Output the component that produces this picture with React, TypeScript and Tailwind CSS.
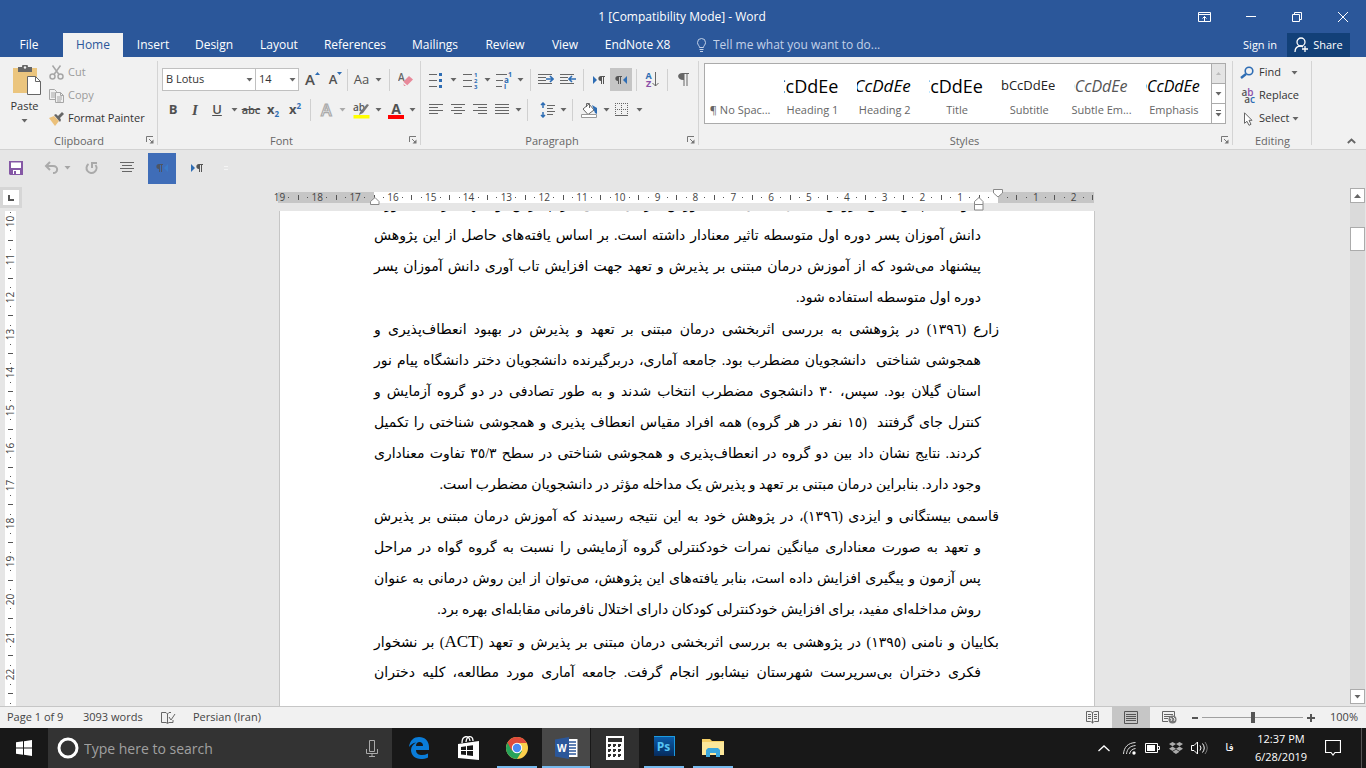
import { ReactNode } from "react";
import clsx from "clsx";

interface LineProps {
  children: ReactNode;
  first?: boolean;
  last?: boolean;
}

const tabs = [
  { name: "Insert", width: "w-[60px]" },
  { name: "Design", width: "w-[62px]" },
  { name: "Layout", width: "w-[68px]" },
  { name: "References", width: "w-[84px]" },
  { name: "Mailings", width: "w-[76px]" },
  { name: "Review", width: "w-[64px]" },
  { name: "View", width: "w-[56px]" },
  { name: "EndNote X8", width: "w-[89px]" },
];

const styles = [
  { name: "¶ No Spac...", sample: "", look: "text-lg" },
  { name: "Heading 1", sample: "AaBbCcDdEe", look: "text-lg text-black font-medium" },
  { name: "Heading 2", sample: "AaBbCcDdEe", look: "text-[17px] text-black font-medium italic" },
  { name: "Title", sample: "AaBbCcDdEe", look: "text-lg text-black font-medium" },
  { name: "Subtitle", sample: "AaBbCcDdEe", look: "text-[13px] text-[#222]" },
  { name: "Subtle Em...", sample: "AaBbCcDdEe", look: "text-[16px] text-[#555] italic" },
  { name: "Emphasis", sample: "AaBbCcDdEe", look: "text-[16px] text-black italic" },
];

const rulerNumbers = [
  "19", "18", "17", "16", "15", "14", "13", "12", "11", "10", "9",
  "8", "7", "6", "5", "4", "3", "2", "1", "", "1", "2",
];

const sideNumbers = ["10", "11", "12", "13", "14", "15", "16", "17", "18", "19", "20", "21", "22", ""];

const Arrow = ({ className = "w-3" }: { className?: string }) => (
  <span className={clsx("flex shrink-0 justify-center", className)}>
    <svg width="7" height="4" viewBox="0 0 7 4">
      <path d="M0.5 0h6L3.5 3.5z" fill="#666" />
    </svg>
  </span>
);

const Sep = ({ className }: { className?: string }) => (
  <span className={clsx("h-[22px] w-px shrink-0 bg-[#d0d0d0]", className)} />
);

const Tool = ({ label, children, className = "w-[22px]" }: { label: string; children: ReactNode; className?: string }) => (
  <button aria-label={label} className={clsx("flex h-[23px] shrink-0 items-center justify-center", className)}>
    {children}
  </button>
);

const Launcher = () => (
  <button aria-label="More options" className="absolute right-1 bottom-[5px]">
    <svg width="8" height="8" viewBox="0 0 8 8" fill="none" stroke="#777">
      <path d="M0.5 6V0.5H7M3 3l3 3" />
      <path d="M7.5 3.5v4h-4z" fill="#777" stroke="none" />
    </svg>
  </button>
);

const Group = ({ title, width, children, launcher = true }: { title: string; width: string; children: ReactNode; launcher?: boolean }) => (
  <section className={clsx("relative flex h-[92px] flex-col", width)}>
    <div className="h-[76px]">{children}</div>
    <div className="text-center text-[11px] leading-4 text-[#666]">{title}</div>
    {launcher && <Launcher />}
    <span className="absolute top-1 right-0 h-[84px] w-px bg-[#d4d4d4]" />
  </section>
);

const Lines = ({ d }: { d: string }) => (
  <svg width="14" height="12" viewBox="0 0 14 12" fill="none" stroke="#666">
    <path d={d} />
  </svg>
);

const Pilcrow = ({ dir, dark = "#555", blue = "#2e6db4" }: { dir: "ltr" | "rtl"; dark?: string; blue?: string }) => (
  <svg width="14" height="10" viewBox="0 0 14 10">
    <path d={dir === "ltr" ? "M1 1v8L5 5z" : "M13 1v8L9 5z"} fill={blue} />
    <path
      d={dir === "ltr" ? "M9 1h4v1h-1v7h-1V2h-1v7H9V6C5.500 6 5.500 1 9 1z" : "M4 1h4v1H7v7H6V2H5v7H4V6C.5 6 .5 1 4 1z"}
      fill={dark}
    />
  </svg>
);

const ClipboardGroup = () => (
  <Group title="Clipboard" width="w-[158px]">
    <div className="flex">
      <button className="flex w-[49px] shrink-0 flex-col items-center pt-2 text-[11px] leading-4">
        <svg width="29" height="31" viewBox="0 0 29 31" className="ml-1">
          <path d="M1 3h24v25H1z" fill="#ebc57e" />
          <path d="M6 2h4a3 3 0 0 1 6 0h4v5H6z" fill="#666" />
          <circle cx="13" cy="2.500" r="1.200" fill="#f1f1f1" />
          <path d="M15.500 11.500h8l5 5v13h-13z" fill="#fff" stroke="#666" />
          <path d="M23.500 11.500v5h5" fill="none" stroke="#666" />
        </svg>
        <span className="mt-[2px]">Paste</span>
        <Arrow className="mt-[5px] w-3" />
      </button>
      <div className="flex flex-col pt-1 text-[11px] whitespace-nowrap">
        <button className="flex h-[23px] items-center gap-1 text-[#9b9b9b]">
          <svg width="15" height="15" viewBox="0 0 15 15" fill="none" stroke="#a6a6a6" strokeWidth="1.500">
            <path d="M3.500 0.500l6.500 9M11.500 0.500L5 9.500" />
            <circle cx="3.500" cy="11.500" r="2.500" />
            <circle cx="11.500" cy="11.500" r="2.500" />
          </svg>
          Cut
        </button>
        <button className="flex h-[23px] items-center gap-1 text-[#9b9b9b]">
          <svg width="15" height="14" viewBox="0 0 15 14" fill="#f1f1f1" stroke="#a6a6a6">
            <path d="M0.500 0.500h5l2 2v8h-7zM2 4h4M2 6h4M2 8h4" />
            <path d="M6.500 3.500h5l3 3v7h-8zM11.500 3.500v3h3M8 8h5M8 10h5M8 12h4" />
          </svg>
          Copy
        </button>
        <button className="flex h-[23px] items-center gap-1">
          <svg width="15" height="14" viewBox="0 0 15 14">
            <path d="M0 6l5-2 5 5-4 5z" fill="#ebc07a" />
            <path d="M5 3l2-1 2 2 4-4 2 2-4 4 1 2-1 2z" fill="#666" />
          </svg>
          Format Painter
        </button>
      </div>
    </div>
  </Group>
);

const FontGroup = () => (
  <Group title="Font" width="w-[263px] pr-4">
    <div className="flex flex-col gap-[7px] pt-[11px] pl-1 text-[#505050]">
      <div className="flex h-[23px] items-center">
        <label className="flex h-[23px] w-[94px] shrink-0 items-center border border-[#c0c0c0] bg-white">
          <select aria-label="Font" className="h-full w-20 appearance-none pl-[3px] text-[11px] text-[#333]">
            <option>B Lotus</option>
          </select>
          <Arrow />
        </label>
        <label className="-ml-px flex h-[23px] w-[44px] shrink-0 items-center border border-[#c0c0c0] bg-white">
          <select aria-label="Font size" className="h-full w-[30px] appearance-none pl-[3px] text-[11px] text-[#333]">
            <option>14</option>
          </select>
          <Arrow />
        </label>
        <Tool label="Increase font size" className="ml-[2px] w-[23px]">
          <span className="text-[15px] font-semibold">A</span>
          <svg width="5" height="3" className="mb-3"><path d="M0 3L2.500 0L5 3z" fill="#2e6db4" /></svg>
        </Tool>
        <Tool label="Decrease font size" className="w-[23px]">
          <span className="text-[13px] font-semibold">A</span>
          <svg width="5" height="3" className="mb-3"><path d="M0 0h5L2.500 3z" fill="#2e6db4" /></svg>
        </Tool>
        <Sep />
        <Tool label="Change case" className="w-[41px] gap-1">
          <span className="text-[13px]">Aa</span>
          <Arrow className="w-[10px]" />
        </Tool>
        <Sep />
        <Tool label="Clear formatting" className="ml-1 w-[22px]">
          <svg width="15" height="15" viewBox="0 0 15 15">
            <text x="0" y="9" fontSize="10" fontWeight="600" fill="#666">A</text>
            <path d="M5 10l6-6 4 3.500-6.500 6.500H6z" fill="#e8899a" />
            <path d="M4 9.500L9 14" stroke="#f1f1f1" strokeWidth="1.500" />
          </svg>
        </Tool>
      </div>
      <div className="flex h-6 items-center text-[13px]">
        <Tool label="Bold"><b>B</b></Tool>
        <Tool label="Italic"><i className="font-['Liberation_Serif',serif] text-[15px] font-bold">I</i></Tool>
        <Tool label="Underline"><u className="font-semibold">U</u></Tool>
        <Arrow />
        <Tool label="Strikethrough"><s className="text-[11px] font-semibold">abc</s></Tool>
        <Tool label="Subscript"><b>x</b><b className="mt-2 text-[8px] text-[#2e6db4]">2</b></Tool>
        <Tool label="Superscript"><b>x</b><b className="mb-2 text-[8px] text-[#2e6db4]">2</b></Tool>
        <Sep className="mx-1" />
        <Tool label="Text effects">
          <svg width="14" height="16" viewBox="0 0 14 16" className="overflow-visible">
            <text x="2" y="14" fontSize="16" fontWeight="600" fill="#fff" stroke="#aaa" strokeWidth="1.200">A</text>
          </svg>
        </Tool>
        <Arrow className="w-[10px] opacity-50" />
        <Tool label="Highlight" className="ml-[2px] w-6 flex-col">
          <svg width="17" height="17" viewBox="0 0 17 17" className="overflow-visible">
            <text x="0" y="9" fontSize="10" fontWeight="600" fill="#555">ab</text>
            <path d="M14 2l2 1-6 8-4 2 1-3z" fill="#777" />
            <path d="M0.500 13h16v3.500h-16z" fill="#ff0" />
          </svg>
        </Tool>
        <Arrow className="w-[10px]" />
        <Tool label="Font color" className="ml-[2px] w-[22px] flex-col">
          <b className="h-[13px] text-[14px] leading-[13px]">A</b>
          <span className="h-1 w-4 bg-[#f00]" />
        </Tool>
        <Arrow className="w-[10px]" />
      </div>
    </div>
  </Group>
);

const ParagraphGroup = () => (
  <Group title="Paragraph" width="w-[278px] pr-4">
    <div className="flex flex-col gap-[7px] pt-[11px] pl-1">
      <div className="flex h-[23px] items-center">
        <Tool label="Bullets">
          <svg width="14" height="16" viewBox="0 0 14 16">
            <path d="M0 2.500h8M0 8.500h8M0 14.500h8" stroke="#666" />
            <path d="M10 1h3v3h-3zM10 7h3v3h-3zM10 13h3v3h-3z" fill="#2e6db4" />
          </svg>
        </Tool>
        <Arrow />
        <Tool label="Numbering">
          <svg width="15" height="16" viewBox="0 0 15 16" className="overflow-visible">
            <path d="M0 2.500h9M0 8.500h9M0 14.500h9" stroke="#666" />
            <g fontSize="6" fontWeight="700" fill="#2e6db4">
              <text x="11" y="5">1</text>
              <text x="11" y="11">2</text>
              <text x="11" y="17">3</text>
            </g>
          </svg>
        </Tool>
        <Arrow />
        <Tool label="Multilevel list">
          <svg width="16" height="16" viewBox="0 0 16 16" className="overflow-visible">
            <path d="M0 2.500h11M0 8.500h7M0 14.500h6" stroke="#666" />
            <g fontSize="7" fontWeight="700" fill="#2e6db4">
              <text x="12" y="5">1</text>
              <text x="8" y="11" fontSize="8">a</text>
              <text x="8" y="17">i</text>
            </g>
          </svg>
        </Tool>
        <Arrow className="w-[10px]" />
        <Sep className="ml-[5px]" />
        <Tool label="Decrease indent" className="ml-1 w-[22px]">
          <svg width="16" height="11" viewBox="0 0 16 11">
            <path d="M0 .5h14M0 3.500h8M0 6.500h8M0 9.500h14" stroke="#666" />
            <path d="M8 5h7M12 2l3 3-3 3" fill="none" stroke="#2e6db4" strokeWidth="1.600" />
          </svg>
        </Tool>
        <Tool label="Increase indent">
          <svg width="16" height="11" viewBox="0 0 16 11">
            <path d="M0 .5h14M0 3.500h8M0 6.500h8M0 9.500h14" stroke="#666" />
            <path d="M16 5H9M12 2L9 5l3 3" fill="none" stroke="#2e6db4" strokeWidth="1.600" />
          </svg>
        </Tool>
        <Sep className="ml-1" />
        <Tool label="Left to right" className="ml-1 w-[22px]"><Pilcrow dir="ltr" /></Tool>
        <Tool label="Right to left" className="w-[22px] bg-[#c5c5c5]"><Pilcrow dir="rtl" /></Tool>
        <Sep className="ml-1" />
        <Tool label="Sort" className="ml-1 w-[22px]">
          <span className="flex flex-col text-[9px] leading-2 font-bold">
            <span className="text-[#2e6db4]">A</span>
            <span className="text-[#8a4fa8]">Z</span>
          </span>
          <svg width="7" height="15" viewBox="0 0 7 15" fill="none" stroke="#666"><path d="M3.500 0v14M0.500 11l3 3 3-3" /></svg>
        </Tool>
        <Sep className="ml-1" />
        <Tool label="Show marks" className="ml-1 w-[22px]">
          <svg width="11" height="13" viewBox="0 0 11 13"><path d="M4.500 0H11v1H9.500v12h-1V1h-2v12h-1V7C-1.500 7-1.500 0 4.500 0z" fill="#666" /></svg>
        </Tool>
      </div>
      <div className="flex h-6 items-center">
        <Tool label="Align left"><Lines d="M0 .5h14M0 3.500h9M0 6.500h14M0 9.500h9" /></Tool>
        <Tool label="Center"><Lines d="M0 .5h14M3 3.500h8M0 6.500h14M3 9.500h8" /></Tool>
        <Tool label="Align right"><Lines d="M0 .5h14M5 3.500h9M0 6.500h14M5 9.500h9" /></Tool>
        <Tool label="Justify"><Lines d="M0 .5h14M0 3.500h14M0 6.500h14M0 9.500h14" /></Tool>
        <Arrow className="w-[10px]" />
        <Sep className="mx-1" />
        <Tool label="Line spacing" className="ml-1 w-[22px]">
          <svg width="15" height="16" viewBox="0 0 15 16" fill="none">
            <path d="M3 1v5M1 3l2-2 2 2M3 15v-5M1 13l2 2 2-2" stroke="#2e6db4" strokeWidth="1.500" />
            <path d="M7 3.500h8M7 6.500h6M7 9.500h8M7 12.500h6" stroke="#666" />
          </svg>
        </Tool>
        <Arrow className="w-[10px]" />
        <Sep className="mx-1" />
        <Tool label="Shading" className="w-6">
          <svg width="17" height="16" viewBox="0 0 17 16">
            <path d="M2 7l6-5 5 6-6 4.500z" fill="#fff" stroke="#666" />
            <path d="M5.500 5V1.500h3V6" fill="none" stroke="#666" />
            <path d="M11 3l5 3v6l-2-1z" fill="#2e6db4" />
            <path d="M0.500 12.500h15v3h-15z" fill="#fff" stroke="#999" />
          </svg>
        </Tool>
        <Arrow className="w-[10px]" />
        <Tool label="Borders">
          <svg width="14" height="14" viewBox="0 0 14 14" fill="none" stroke="#666">
            <path d="M.5 0v13M6.500 0v13M12.500 0v13M0 .5h13M0 6.500h13" strokeDasharray="1 1" />
            <path d="M0 12.500h13" />
          </svg>
        </Tool>
        <Arrow />
      </div>
    </div>
  </Group>
);

const StylesGroup = () => (
  <Group title="Styles" width="min-w-0 flex-1 pl-[5px] pr-2">
    <div className="-mr-px pt-[6px]">
      <div className="flex h-[61px] border border-[#ababab] bg-white">
        <div className="flex flex-1 overflow-hidden">
          {styles.map((s) => (
            <button key={s.name} className="flex min-w-0 flex-1 flex-col items-center pr-[2px]">
              <span className={clsx("mr-[2px] flex h-[38px] w-[54px] items-center justify-end overflow-hidden pt-[5px]", s.look)}>
                {s.sample}
              </span>
              <span className="text-[11px] leading-4 whitespace-nowrap text-[#666]">{s.name}</span>
            </button>
          ))}
        </div>
        <div className="flex w-[14px] flex-col divide-y divide-[#ababab] border-l border-[#ababab]">
          <button aria-label="Scroll up" className="flex flex-1 items-center justify-center bg-[#e4e4e4]">
            <svg width="5" height="3"><path d="M0 3L2.500 0L5 3z" fill="#bbb" /></svg>
          </button>
          <button aria-label="Scroll down" className="flex flex-1 items-center justify-center"><Arrow /></button>
          <button aria-label="More styles" className="flex flex-1 flex-col items-center justify-center gap-[2px]">
            <span className="h-px w-[5px] bg-[#666]" />
            <Arrow />
          </button>
        </div>
      </div>
    </div>
  </Group>
);

const EditingGroup = () => (
  <Group title="Editing" width="w-[79px]" launcher={false}>
    <div className="flex flex-col pt-1 pl-[7px] text-[11px]">
      <button className="flex h-[23px] items-center gap-1">
        <svg width="15" height="13" viewBox="0 0 15 13" fill="none" stroke="#2e6db4">
          <circle cx="9" cy="5" r="3.800" strokeWidth="1.600" />
          <path d="M6 8l-5 4" strokeWidth="2.500" />
        </svg>
        Find
        <Arrow className="ml-1 w-3" />
      </button>
      <button className="flex h-[23px] items-center gap-1">
        <span className="flex w-[15px] flex-col text-[10px] leading-[7px] font-semibold text-[#555]">
          <span>a<span className="text-[#8a4fa8]">b</span></span>
          <span className="self-end">a<span className="text-[#2e6db4]">c</span></span>
        </span>
        Replace
      </button>
      <button className="flex h-[23px] items-center gap-1">
        <svg width="15" height="14" viewBox="0 0 15 14">
          <path d="M4.500 .8v10.500l2.500-2 2 4 2-1-2-4h3z" fill="#fff" stroke="#666" />
        </svg>
        Select
        <Arrow className="-ml-1 w-3" />
      </button>
    </div>
  </Group>
);

const QuickAccess = () => (
  <div className="flex h-[37px] items-center border-t border-[#d2d2d2]">
    <Tool label="Save" className="w-8">
      <svg width="14" height="14" viewBox="0 0 14 14">
        <path d="M0 0h14v14H1l-1-1z" fill="#8558a5" />
        <path d="M2 1.500h10V7H2zM4 9h7v4H4z" fill="#fff" />
        <path d="M5 10h2v3H5z" fill="#8558a5" />
      </svg>
    </Tool>
    <Tool label="Undo" className="ml-2 w-[22px]">
      <svg width="15" height="14" viewBox="0 0 15 14" fill="none" stroke="#aaa" strokeWidth="2">
        <path d="M6 1L2 5l4 4M2 5h7c6 0 5 7 0 7" />
      </svg>
    </Tool>
    <Arrow className="w-[10px] opacity-50" />
    <Tool label="Redo" className="ml-2 w-[22px]">
      <svg width="15" height="14" viewBox="0 0 15 14" fill="none" stroke="#aaa" strokeWidth="2">
        <path d="M8 7V2h5M4.500 3a5 5 0 1 0 7 1" />
      </svg>
    </Tool>
    <Tool label="Center text" className="ml-[14px] w-[22px]"><Lines d="M0 .5h14M2 3.500h10M0 6.500h14M2 9.500h10" /></Tool>
    <button aria-label="Right to left" className="ml-[10px] flex h-[31px] w-7 items-center justify-center bg-[#3f6db8]">
      <Pilcrow dir="rtl" dark="#4d5563" blue="#3a7ac8" />
    </button>
    <Tool label="Left to right text" className="ml-[10px] w-[22px]"><Pilcrow dir="ltr" /></Tool>
    <span className="ml-4 flex w-1 flex-col gap-[2px]">
      <span className="h-px bg-[#f4f4f4]" />
      <span className="h-px bg-[#f4f4f4]" />
    </span>
  </div>
);

const Ruler = () => (
  <div className="relative mt-[5px] h-[11px] w-[814px]">
    <div className="-ml-[27px] flex h-full w-[847px] bg-[linear-gradient(to_right,transparent_25px,#c6c6c6_25px,#c6c6c6_121px,#fff_121px,#fff_745px,#c6c6c6_745px,#c6c6c6_841px,transparent_841px)] text-[10px] leading-[11px] text-[#444]">
      <div className="grid flex-1 grid-cols-[repeat(22,minmax(0,1fr))]">
        {rulerNumbers.map((n, i) => (
          <div key={i} className="grid grid-cols-[4fr_1fr_4fr_1fr] items-center justify-items-center">
            <span className={clsx("h-[5px] w-px", i > 0 && "bg-[#555]")} />
            <span className={clsx("size-px", i > 0 && "bg-[#555]")} />
            <span>{n}</span>
            <span className="size-px bg-[#555]" />
          </div>
        ))}
      </div>
      <span className="flex w-[15px] items-center justify-center"><span className="h-[5px] w-px bg-[#555]" /></span>
    </div>
    <svg width="10" height="8" viewBox="0 0 10 8" className="absolute top-[5px] left-[90px]">
      <path d="M.5 7.500V4.500L5 .5l4 4v3z" fill="#fff" stroke="#888" />
    </svg>
    <svg width="10" height="14" viewBox="0 0 10 14" className="absolute top-[5px] left-[694px]">
      <path d="M.5 7.500V4.500L5 .5l4 4v3zM.5 7.500h8.500v5.500H.5z" fill="#fff" stroke="#888" />
    </svg>
    <svg width="10" height="9" viewBox="0 0 10 9" className="absolute -top-[3px] left-[713px]">
      <path d="M.5.5h9v3.500L5 8 .5 4z" fill="#fff" stroke="#888" />
    </svg>
  </div>
);

const SideRuler = () => (
  <div className="ml-[5px] w-[11px] overflow-hidden bg-white">
    <div className="-mt-[16px] grid h-[529px] grid-rows-[repeat(14,minmax(0,1fr))] text-[10px] leading-[11px] text-[#444]">
      {sideNumbers.map((n, i) => (
        <div key={i} className="grid grid-rows-[4fr_1fr_4fr_1fr] items-center justify-items-center">
          <span className="h-px w-[5px] bg-[#555]" />
          <span className="size-px bg-[#555]" />
          <span className="-rotate-90">{n}</span>
          <span className="size-px bg-[#555]" />
        </div>
      ))}
    </div>
  </div>
);

const Line = ({ children, first, last }: LineProps) => (
  <span
    className={clsx(
      "block h-[31px] whitespace-nowrap",
      !first && "pr-[18px]",
      last ? "text-right" : "[text-align-last:justify]"
    )}
  >
    {children}
  </span>
);

const Page = () => (
  <article
    dir="rtl"
    lang="fa"
    className="h-full w-[816px] overflow-hidden border-x border-[#c6c6c6] bg-white pr-[95px] pl-[94px] font-['Liberation_Serif','DejaVu_Sans',serif] text-[14px] leading-[31px] text-black"
  >
    <div className="-mt-[22px] flex flex-col gap-px">
      <p>
        <Line>نمود. همچنین نتایج روش تحلیل نشان داد آموزش درمان مبتنی بر پذیرش و تعهد بر تاب آوری</Line>
        <Line>دانش آموزان پسر دوره اول متوسطه تاثیر معنادار داشته است. بر اساس یافته‌های حاصل از این پژوهش</Line>
        <Line>پیشنهاد می‌شود که از آموزش درمان مبتنی بر پذیرش و تعهد جهت افزایش تاب آوری دانش آموزان پسر</Line>
        <Line last>دوره اول متوسطه استفاده شود.</Line>
      </p>
      <p>
        <Line first>زارع (١٣٩٦) در پژوهشی به بررسی اثربخشی درمان مبتنی بر تعهد و پذیرش در بهبود انعطاف‌پذیری و</Line>
        <Line>همجوشی شناختی&nbsp; دانشجویان مضطرب بود. جامعه آماری، دربرگیرنده دانشجویان دختر دانشگاه پیام نور</Line>
        <Line>استان گیلان بود. سپس، ٣٠ دانشجوی مضطرب انتخاب شدند و به طور تصادفی در دو گروه آزمایش و</Line>
        <Line>کنترل جای گرفتند&nbsp; (١٥ نفر در هر گروه) همه افراد مقیاس انعطاف پذیری و همجوشی شناختی را تکمیل</Line>
        <Line>کردند. نتایج نشان داد بین دو گروه در انعطاف‌پذیری و همجوشی شناختی در سطح ٣٥/٣ تفاوت معناداری</Line>
        <Line last>وجود دارد. بنابراین درمان مبتنی بر تعهد و پذیرش یک مداخله مؤثر در دانشجویان مضطرب است.</Line>
      </p>
      <p>
        <Line first>قاسمی بیستگانی و ایزدی (١٣٩٦)، در پژوهش خود به این نتیجه رسیدند که آموزش درمان مبتنی بر پذیرش</Line>
        <Line>و تعهد به صورت معناداری میانگین نمرات خودکنترلی گروه آزمایشی را نسبت به گروه گواه در مراحل</Line>
        <Line>پس آزمون و پیگیری افزایش داده است، بنابر یافته‌های این پژوهش، می‌توان از این روش درمانی به عنوان</Line>
        <Line last>روش مداخله‌ای مفید، برای افزایش خودکنترلی کودکان دارای اختلال نافرمانی مقابله‌ای بهره برد.</Line>
      </p>
      <p>
        <Line first>
          بکاییان و نامنی (١٣٩٥) در پژوهشی به بررسی اثربخشی درمان مبتنی بر پذیرش و تعهد (
          <span className="text-[17px]">ACT</span>) بر نشخوار
        </Line>
        <Line>فکری دختران بی‌سرپرست شهرستان نیشابور انجام گرفت. جامعه آماری مورد مطالعه، کلیه دختران</Line>
      </p>
    </div>
  </article>
);

const StatusBar = () => (
  <footer className="flex h-[22px] items-center border-t border-[#c6c6c6] bg-[#f1f1f1] pl-[7px] text-[11px] text-[#444]">
    <span className="w-[76px]">Page 1 of 9</span>
    <span className="w-[78px]">3093 words</span>
    <button aria-label="Proofing" className="w-8">
      <svg width="15" height="12" viewBox="0 0 15 12" fill="none" stroke="#666">
        <path d="M6.500 2L5 .5H.5v10H5l1.500 1L8 10.500h4V8M6.500 2v9M6.500 2L8 .5h2M8 5l2 3 4-6" />
      </svg>
    </button>
    <span>Persian (Iran)</span>
    <div className="ml-auto flex h-full items-center">
      <button aria-label="Read mode" className="flex w-10 justify-center">
        <svg width="13" height="13" viewBox="0 0 13 13" fill="none" stroke="#666">
          <path d="M6.500 1.500v11M.5.5h4l2 1 2-1h4v10h-4l-2 1-2-1h-4zM2 3.500h3M2 5.500h3M2 7.500h3M8 3.500h3M8 5.500h3M8 7.500h3" />
        </svg>
      </button>
      <button aria-label="Print layout" className="flex h-full w-[38px] items-center justify-center bg-[#c6c6c6]">
        <svg width="14" height="13" viewBox="0 0 14 13" fill="none" stroke="#555">
          <path d="M.5.5h13v12H.5zM2 3.500h10M2 5.500h10M2 7.500h10M2 9.500h10" />
        </svg>
      </button>
      <button aria-label="Web layout" className="flex w-[38px] justify-center">
        <svg width="15" height="13" viewBox="0 0 15 13" fill="none" stroke="#666">
          <path d="M12.500 5V.5H.5v10H6M2 3.500h9M2 5.500h6M2 7.500h4" />
          <circle cx="10.500" cy="8.500" r="4" fill="#777" stroke="none" />
          <path d="M8 7l2 1-1 2M11 6l2 2-1 2" stroke="#eee" />
        </svg>
      </button>
      <button aria-label="Zoom out" className="ml-1 h-[2px] w-[6px] bg-[#555]" />
      <input
        type="range"
        aria-label="Zoom"
        defaultValue={50}
        className="mx-1 h-3 w-[101px] appearance-none bg-[linear-gradient(#a0a0a0,#a0a0a0)] bg-[length:100%_1px] bg-center bg-no-repeat [&::-webkit-slider-thumb]:h-[11px] [&::-webkit-slider-thumb]:w-1 [&::-webkit-slider-thumb]:appearance-none [&::-webkit-slider-thumb]:bg-[#555]"
      />
      <button aria-label="Zoom in">
        <svg width="8" height="8" viewBox="0 0 8 8" stroke="#555" strokeWidth="2"><path d="M0 4h8M4 0v8" /></svg>
      </button>
      <span className="w-[51px] pr-2 text-right">100%</span>
    </div>
  </footer>
);

const TaskItem = ({ label, children, className, bar }: { label: string; children: ReactNode; className?: string; bar?: string }) => (
  <button aria-label={label} className={clsx("relative flex h-10 w-12 items-center justify-center", className)}>
    {children}
    {bar && <span className={clsx("absolute bottom-0 h-[2px] bg-[#76b9ed]", bar)} />}
  </button>
);

const Taskbar = () => (
  <nav className="flex h-10 items-center bg-[#181818] text-white">
    <button aria-label="Start" className="flex w-12 justify-center">
      <svg width="16" height="16" viewBox="0 0 16 16" fill="#fff">
        <path d="M0 2.300L7 1.300V7.500H0zM8 1.200L16 0v7.500H8zM0 8.500h7v6.200L0 13.700zM8 8.500h8V16l-8-1.200z" />
      </svg>
    </button>
    <label className="flex h-full w-[344px] items-center bg-[#333] pl-[9px]">
      <svg width="22" height="22" viewBox="0 0 22 22" fill="none" stroke="#fff" strokeWidth="3"><circle cx="11" cy="11" r="9" /></svg>
      <input
        placeholder="Type here to search"
        aria-label="Search"
        className="ml-[5px] min-w-0 flex-1 text-[14px] outline-none placeholder:text-[#a0a0a0]"
      />
      <svg width="12" height="17" viewBox="0 0 12 17" fill="none" stroke="#aaa" className="mr-[14px]">
        <path d="M3.500.5h5v11h-5zM.5 9v4.500h11V9M6 13.500v3M3 16.500h6" />
      </svg>
    </label>
    <div className="ml-[3px] flex gap-px">
      <TaskItem label="Edge">
        <svg width="20" height="22" viewBox="0 0 20 22">
          <path d="M0 10C1 3 5 0 10 0c6 0 10 4 10 10v3H7c0 4 3 5 6 5 2 0 4-.5 6-1.500v4C17 21.500 14 22 12 22 6 22 2 18 2 13c0-3 2-6 5-7.500C4 6 2 7.500 0 10zm7-1h7c0-3-1.500-4-3.500-4S7 6.500 7 9z" fill="#0a7cd8" fillRule="evenodd" />
        </svg>
      </TaskItem>
      <TaskItem label="Store">
        <svg width="21" height="24" viewBox="0 0 21 24">
          <path d="M0 8l21-3v19L0 22z" fill="#fff" />
          <path d="M4 7C4-1 11-1 12 5M8 6C9-2 15 0 15 5" fill="none" stroke="#fff" strokeWidth="1.300" />
          <path d="M3 11l5-.7V14H3zM9 10l6-.8V14H9zM3 15h5v4l-5-.6zM9 15h6v5l-6-.8z" fill="#181818" />
        </svg>
      </TaskItem>
      <TaskItem label="Chrome" bar="w-10">
        <svg width="22" height="22" viewBox="0 0 22 22">
          <circle cx="11" cy="11" r="11" fill="#fbcf4b" />
          <path d="M11 11L1.500 5.500A11 11 0 0 0 11 22l5-8z" fill="#27a35a" />
          <path d="M1.500 5.500A11 11 0 0 1 20.800 6H11l-5 8z" fill="#df4b3c" />
          <circle cx="11" cy="11" r="5.200" fill="#fff" />
          <circle cx="11" cy="11" r="4.200" fill="#4a8af4" />
        </svg>
      </TaskItem>
      <TaskItem label="Word" className="bg-[#484848]" bar="w-12">
        <svg width="23" height="22" viewBox="0 0 23 22">
          <path d="M12 2h10.500v18H12z" fill="#fff" />
          <path d="M14 5h7M14 8h7M14 11h7M14 14h7M14 17h7" stroke="#2b579a" strokeWidth="1.500" />
          <path d="M0 2.500L14 0v22L0 19.500z" fill="#2b579a" />
          <text x="2" y="15" fontSize="10" fontWeight="700" fill="#fff">W</text>
        </svg>
      </TaskItem>
      <TaskItem label="Calculator" className="bg-[#303030]">
        <svg width="18" height="24" viewBox="0 0 18 24">
          <path d="M0 0h18v24H0z" fill="#fff" />
          <path d="M2 2h14v4H2z" fill="#303030" />
          <path d="M2 8h3v2H4v1H2zM7 8h3v2H9v1H7zM12 8h3v2h-1v1h-2zM2 13h3v2H4v1H2zM7 13h3v2H9v1H7zM12 13h3v2h-1v1h-2zM2 18h3v2H4v1H2zM7 18h3v2H9v1H7zM12 18h3v2h-1v1h-2z" fill="#303030" />
        </svg>
      </TaskItem>
      <TaskItem label="Photoshop" bar="w-10">
        <span className="-mt-1 flex h-5 w-[21px] items-center justify-center border-t border-r border-[#1c9be0] bg-linear-to-b from-[#0a5ba8] to-[#062c5e] text-[12px] font-bold text-[#55c4f5]">Ps</span>
      </TaskItem>
      <TaskItem label="Explorer" bar="w-10">
        <svg width="22" height="20" viewBox="0 0 22 20">
          <path d="M0 1h8l2 2h12v14H0z" fill="#f5cf66" />
          <path d="M0 4h22v13H0z" fill="#fce79a" />
          <path d="M4 19v-7l2-2h10l2 2v7h-4v-4H8v4z" fill="#3ba7dd" />
        </svg>
      </TaskItem>
    </div>
    <div className="ml-auto flex h-full items-center">
      <svg width="12" height="7" viewBox="0 0 12 7" fill="none" stroke="#fff" strokeWidth="1.300"><path d="M.5 6L6 1l5.500 5" /></svg>
      <svg width="13" height="13" viewBox="0 0 13 13" fill="none" stroke="#ddd" className="ml-[13px]">
        <path d="M.5 12C1 5 5 1 12.500.5M3.500 12C4 7 7 4 12.500 3.500M6.500 12C7 9 9 7 12.500 6.500" />
        <circle cx="11" cy="11" r="1.700" fill="#fff" stroke="none" />
      </svg>
      <svg width="15" height="10" viewBox="0 0 15 10" fill="none" stroke="#fff" className="ml-[9px]">
        <path d="M.5.5h12v9H.5zM13 3.500h1.500v3H13" />
        <path d="M2 2h8v6H2z" fill="#fff" stroke="none" />
      </svg>
      <svg width="14" height="12" viewBox="0 0 14 12" fill="#aaa" className="ml-[9px]">
        <path d="M3.500 0L7 2 3.500 4.300 0 2zM10.500 0L14 2l-3.500 2.300L7 2zM3.500 4.500L7 6.800 3.500 9 0 6.800zM10.500 4.500L14 6.800 10.500 9 7 6.800zM7 7.500l3.500 2.200L7 12 3.500 9.700z" />
      </svg>
      <svg width="17" height="14" viewBox="0 0 17 14" fill="none" stroke="#fff" className="ml-2">
        <path d="M.5 4.500h2.500L6.500 1v12L3 9.500H.5zM9 4.500q2 2.500 0 5M11.500 2.500q3.500 4.500 0 9" />
        <path d="M14 1q4.500 6 0 12" stroke="#777" />
      </svg>
      <span className="w-[43px] text-center font-['DejaVu_Sans',sans-serif] text-[11px]">فا</span>
      <time className="w-[60px] text-center text-[11px] leading-[18px]">
        12:37 PM
        <br />
        6/28/2019
      </time>
      <button aria-label="Notifications" className="ml-[14px]">
        <svg width="16" height="16" viewBox="0 0 16 16" fill="none" stroke="#fff" strokeWidth="1.200"><path d="M.5.5h15v12H10L8 15l-2-2.500H.5z" /></svg>
      </button>
      <span className="ml-5 h-full w-[5px] border-l border-[#555]" />
    </div>
  </nav>
);

const App = () => {
  return (
    <div className="flex h-screen flex-col overflow-hidden bg-[#e6e6e6] font-['Open_Sans','Noto_Sans',sans-serif] text-[#333]">
      <header className="bg-[#2b579a] text-white">
        <div className="flex h-[33px] items-center text-[12px]">
          <span className="ml-[184px] flex-1 text-center">1 [Compatibility Mode] - Word</span>
          <div className="flex">
            <button aria-label="Ribbon display options" className="flex w-12 items-center justify-center">
              <svg width="13" height="10" viewBox="0 0 13 10" fill="none" stroke="#fff"><path d="M.5.5h12v9H.5zM.5 2.500h12M6.500 9V4.500M4.500 6.500l2-2 2 2" /></svg>
            </button>
            <button aria-label="Minimize" className="flex w-[46px] items-center justify-center"><span className="h-px w-[10px] bg-white" /></button>
            <button aria-label="Restore" className="flex w-[46px] items-center justify-center">
              <svg width="10" height="10" viewBox="0 0 10 10" fill="none" stroke="#fff"><path d="M.5 2.500h7v7h-7zM2.500 2.500v-2h7v7h-2" /></svg>
            </button>
            <button aria-label="Close" className="flex w-[46px] items-center justify-center">
              <svg width="10" height="10" viewBox="0 0 10 10" fill="none" stroke="#fff"><path d="M0 0l10 10M10 0L0 10" /></svg>
            </button>
          </div>
        </div>
        <div className="flex h-6 items-center text-[12px]">
          <button className="w-[58px]">File</button>
          <button className="ml-[5px] h-6 w-[60px] bg-[#f1f1f1] text-[#2b579a]">Home</button>
          {tabs.map((t) => (
            <button key={t.name} className={clsx("whitespace-nowrap", t.width)}>{t.name}</button>
          ))}
          <label className="ml-[15px] flex items-center gap-[7px] text-[#c3d1e8]">
            <svg width="9" height="14" viewBox="0 0 9 14" fill="none" stroke="#c3d1e8">
              <path d="M2.500 9.500C2.500 7.500.5 7 .5 4.500a4 4 0 0 1 8 0c0 2.500-2 3-2 5zM2.500 11.500h4M3 13.500h3" />
            </svg>
            <input placeholder="Tell me what you want to do..." className="w-[190px] outline-none placeholder:text-[#c3d1e8]" />
          </label>
          <button className="ml-auto text-[11px]">Sign in</button>
          <button className="mr-4 ml-[10px] flex h-6 w-[63px] items-center justify-center gap-1 bg-[#124078] text-[11px]">
            <svg width="15" height="16" viewBox="0 0 15 16" fill="none" stroke="#fff" strokeWidth="1.300">
              <circle cx="7" cy="5" r="4" /><path d="M1 15c0-4 2-6 6-6l2 1M11 9v6M8 12h6" />
            </svg>
            Share
          </button>
        </div>
      </header>

      {/* Ribbon */}
      <div className="flex bg-[#f1f1f1]">
        <ClipboardGroup />
        <FontGroup />
        <ParagraphGroup />
        <StylesGroup />
        <EditingGroup />
        <button aria-label="Collapse ribbon" className="flex w-[54px] items-end justify-end pr-[10px] pb-[5px]">
          <svg width="9" height="6" viewBox="0 0 9 6" fill="none" stroke="#666" strokeWidth="1.800"><path d="M.8 5L4.500 1.500 8.200 5" /></svg>
        </button>
      </div>
      <QuickAccess />

      {/* Document area */}
      <main className="flex min-h-0 flex-1 pt-px">
        <div className="flex w-6 flex-col">
          <button aria-label="Tab selector" className="flex h-[21px] w-[22px] shrink-0 items-center justify-center border-[3px] border-[#d6d6d6] bg-white">
            <svg width="6" height="6" viewBox="0 0 6 6" fill="none" stroke="#555" strokeWidth="2"><path d="M1 0v5h5" /></svg>
          </button>
          <div className="mt-[3px] flex min-h-0 flex-1"><SideRuler /></div>
        </div>
        <div className="flex min-w-0 flex-1 flex-col items-center">
          <Ruler />
          <div className="mt-2 min-h-0 flex-1"><Page /></div>
        </div>
        <div className="flex w-4 flex-col pt-px">
          <button aria-label="Page up" className="flex h-[15px] w-[15px] items-center justify-center border border-[#ababab] bg-white">
            <svg width="7" height="4"><path d="M0 4L3.500 0L7 4z" fill="#666" /></svg>
          </button>
          <div className="w-[15px] flex-1 bg-[#dadada] pt-6">
            <div className="h-6 border border-[#ababab] bg-white" />
          </div>
          <button aria-label="Page down" className="mb-[2px] flex h-[15px] w-[15px] items-center justify-center border border-[#ababab] bg-white">
            <Arrow />
          </button>
        </div>
      </main>
      <StatusBar />
      <Taskbar />
    </div>
  );
};

export default App;
